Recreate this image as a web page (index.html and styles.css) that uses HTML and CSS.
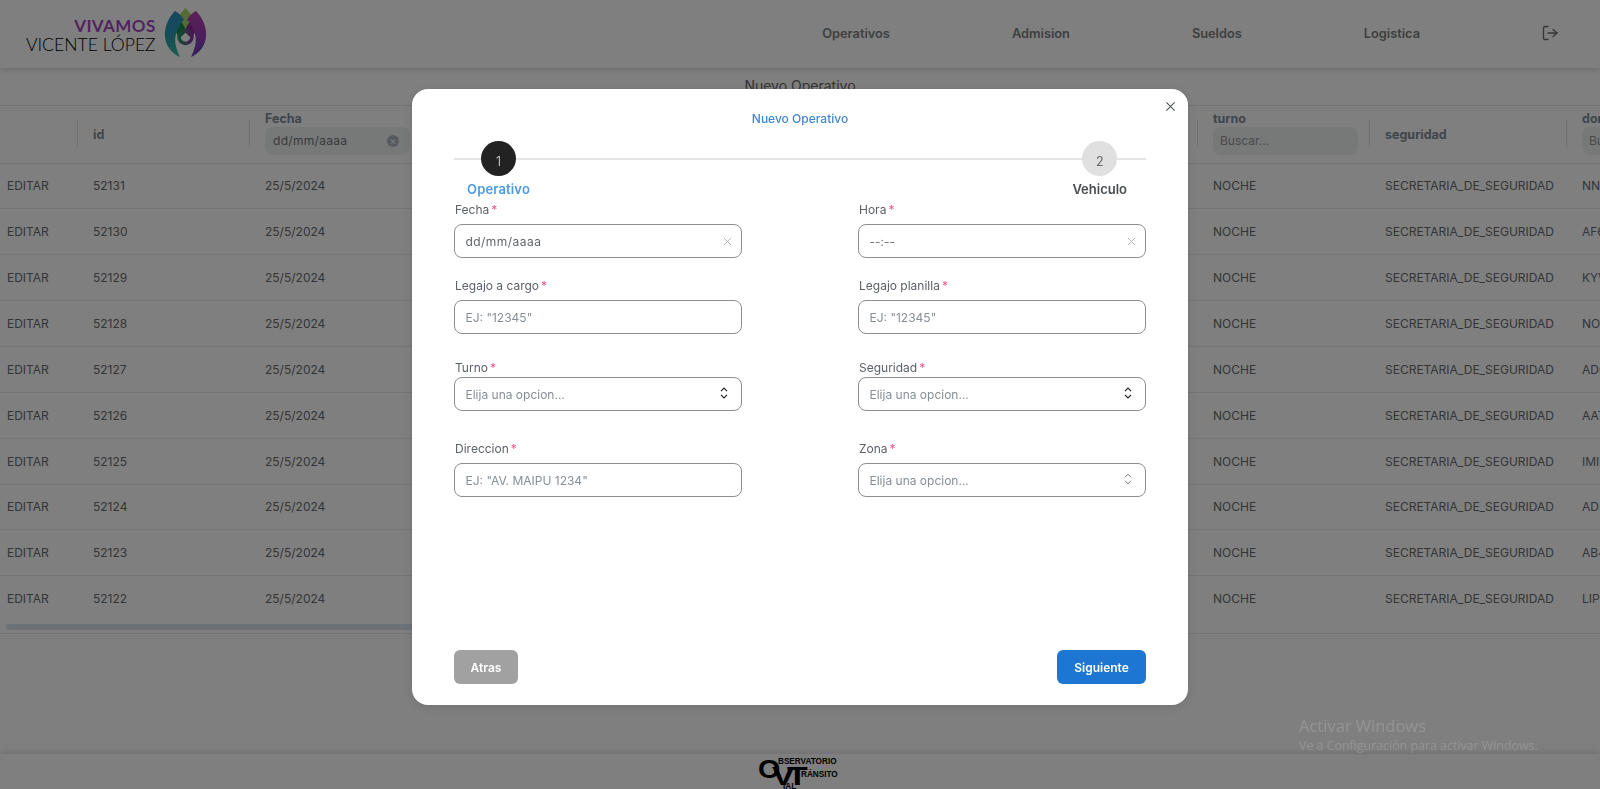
FILE: index.html
```html
<!DOCTYPE html>
<html lang="es">
<head>
    <meta charset="UTF-8">
    <meta name="viewport" content="width=device-width, initial-scale=1.0">
    <title>Nuevo Operativo</title>
    <link rel="stylesheet" href="styles.css">
</head>
<body>
    <header class="topbar">
        <div class="brand">
            <div class="brand-text">
                <span class="brand-top">VIVAMOS</span>
                <span class="brand-bottom">VICENTE LÓPEZ</span>
            </div>
            <svg class="brand-mark" viewBox="0 0 44 50" aria-hidden="true">
                <defs>
                    <linearGradient id="petalLeft" x1="0" y1="0" x2="0" y2="1">
                        <stop offset="0" stop-color="#2f8fc0"/>
                        <stop offset="0.55" stop-color="#2a9ab0"/>
                        <stop offset="1" stop-color="#2fc090"/>
                    </linearGradient>
                    <linearGradient id="petalRight" x1="0" y1="0" x2="0" y2="1">
                        <stop offset="0" stop-color="#b840b0"/>
                        <stop offset="0.5" stop-color="#9a3fb4"/>
                        <stop offset="1" stop-color="#6240c0"/>
                    </linearGradient>
                    <linearGradient id="ring" x1="0" y1="0" x2="1" y2="0">
                        <stop offset="0" stop-color="#1f9a58"/>
                        <stop offset="1" stop-color="#8a3aa8"/>
                    </linearGradient>
                </defs>
                <path d="M21.5 1C25 5 29 9 30 14L22 25L13 14C14 9 18 5 21.5 1Z" fill="#a8d868"/>
                <path d="M13 11C17 14 21 19 22 25L15 32L10 20Z" fill="#0f8a50"/>
                <path d="M30 11C26 14 22 19 21 25L28 32L33 20Z" fill="#8a2f90"/>
                <path d="M11 4C4 11 0 21 1 30C2 40 9 47 16 50C12 42 10 34 12 27C14 21 16 16 20 13C18 9 15 6 11 4Z" fill="url(#petalLeft)"/>
                <path d="M32 4C39 11 43 21 42 30C41 40 34 47 27 50C31 42 33 34 31 27C29 21 27 16 23 13C25 9 28 6 32 4Z" fill="url(#petalRight)"/>
                <circle cx="21.5" cy="30" r="6.5" fill="none" stroke="url(#ring)" stroke-width="3.5"/>
            </svg>
        </div>
        <nav class="nav">
            <a class="nav-link">Operativos</a>
            <a class="nav-link">Admision</a>
            <a class="nav-link">Sueldos</a>
            <a class="nav-link">Logistica</a>
            <svg class="logout" viewBox="0 0 16 16" aria-hidden="true">
                <path d="M6 1.5H2.8A1.3 1.3 0 0 0 1.5 2.8v10.4a1.3 1.3 0 0 0 1.3 1.3H6"/>
                <path d="M11 4.5L15 8L11 11.5"/>
                <path d="M15 8H6"/>
            </svg>
        </nav>
    </header>

    <main class="content">
        <h2 class="page-title">Nuevo Operativo</h2>
        <div class="table-wrap">
            <table class="data-table">
                <colgroup>
                    <col class="col-action">
                    <col class="col-id">
                    <col class="col-date">
                    <col class="col-rest">
                    <col class="col-turn">
                    <col class="col-security">
                    <col class="col-domain">
                </colgroup>
                <thead>
                    <tr>
                        <th></th>
                        <th class="sep">id</th>
                        <th class="sep">
                            <span class="th-label">Fecha</span>
                            <div class="filter filter-date">dd/mm/aaaa<span class="filter-clear">×</span></div>
                        </th>
                        <th></th>
                        <th class="sep">
                            <span class="th-label">turno</span>
                            <div class="filter filter-empty">Buscar...</div>
                        </th>
                        <th class="sep">seguridad</th>
                        <th class="sep">
                            <span class="th-label">dominio</span>
                            <div class="filter filter-empty">Buscar...</div>
                        </th>
                    </tr>
                </thead>
                <tbody>
                    <tr><td>EDITAR</td><td>52131</td><td>25/5/2024</td><td></td><td>NOCHE</td><td>SECRETARIA_DE_SEGURIDAD</td><td>NNA123</td></tr>
                    <tr><td>EDITAR</td><td>52130</td><td>25/5/2024</td><td></td><td>NOCHE</td><td>SECRETARIA_DE_SEGURIDAD</td><td>AF6123</td></tr>
                    <tr><td>EDITAR</td><td>52129</td><td>25/5/2024</td><td></td><td>NOCHE</td><td>SECRETARIA_DE_SEGURIDAD</td><td>KYW123</td></tr>
                    <tr><td>EDITAR</td><td>52128</td><td>25/5/2024</td><td></td><td>NOCHE</td><td>SECRETARIA_DE_SEGURIDAD</td><td>NOA123</td></tr>
                    <tr><td>EDITAR</td><td>52127</td><td>25/5/2024</td><td></td><td>NOCHE</td><td>SECRETARIA_DE_SEGURIDAD</td><td>AD0123</td></tr>
                    <tr><td>EDITAR</td><td>52126</td><td>25/5/2024</td><td></td><td>NOCHE</td><td>SECRETARIA_DE_SEGURIDAD</td><td>AAT123</td></tr>
                    <tr><td>EDITAR</td><td>52125</td><td>25/5/2024</td><td></td><td>NOCHE</td><td>SECRETARIA_DE_SEGURIDAD</td><td>IMI123</td></tr>
                    <tr><td>EDITAR</td><td>52124</td><td>25/5/2024</td><td></td><td>NOCHE</td><td>SECRETARIA_DE_SEGURIDAD</td><td>AD5123</td></tr>
                    <tr><td>EDITAR</td><td>52123</td><td>25/5/2024</td><td></td><td>NOCHE</td><td>SECRETARIA_DE_SEGURIDAD</td><td>AB4123</td></tr>
                    <tr><td>EDITAR</td><td>52122</td><td>25/5/2024</td><td></td><td>NOCHE</td><td>SECRETARIA_DE_SEGURIDAD</td><td>LIP123</td></tr>
                </tbody>
            </table>
            <div class="scroll-track"><div class="scroll-thumb"></div></div>
        </div>
    </main>

    <footer class="bottombar">
        <div class="ovt">
            <span class="ovt-o">O</span>
            <span class="ovt-v">V</span>
            <span class="ovt-t">T</span>
            <span class="ovt-line1">BSERVATORIO</span>
            <span class="ovt-line2">RÁNSITO</span>
            <span class="ovt-line3">IAL</span>
        </div>
    </footer>

    <div class="overlay">
        <section class="modal">
            <button class="modal-close" aria-label="Cerrar">
                <svg viewBox="0 0 12 12" aria-hidden="true"><path d="M1.5 1.5L10.5 10.5M10.5 1.5L1.5 10.5"/></svg>
            </button>
            <h3 class="modal-title">Nuevo Operativo</h3>

            <div class="stepper">
                <div class="step step-active">
                    <span class="step-dot">1</span>
                    <span class="step-label">Operativo</span>
                </div>
                <div class="step">
                    <span class="step-dot">2</span>
                    <span class="step-label">Vehiculo</span>
                </div>
            </div>

            <form class="form">
                <div class="form-row">
                    <div class="field">
                        <label class="field-label">Fecha<span class="req">*</span></label>
                        <div class="control">
                            <input class="input input-value" type="text" value="dd/mm/aaaa">
                            <svg class="icon-clear" viewBox="0 0 10 10" aria-hidden="true"><path d="M1 1L9 9M9 1L1 9"/></svg>
                        </div>
                    </div>
                    <div class="field">
                        <label class="field-label">Hora<span class="req">*</span></label>
                        <div class="control">
                            <input class="input input-time" type="text" value="--:--">
                            <svg class="icon-clear" viewBox="0 0 10 10" aria-hidden="true"><path d="M1 1L9 9M9 1L1 9"/></svg>
                        </div>
                    </div>
                </div>

                <div class="form-row row-b">
                    <div class="field">
                        <label class="field-label">Legajo a cargo<span class="req">*</span></label>
                        <div class="control"><input class="input" type="text" placeholder='EJ: "12345"'></div>
                    </div>
                    <div class="field">
                        <label class="field-label">Legajo planilla<span class="req">*</span></label>
                        <div class="control"><input class="input" type="text" placeholder='EJ: "12345"'></div>
                    </div>
                </div>

                <div class="form-row row-c">
                    <div class="field field-select">
                        <label class="field-label">Turno<span class="req">*</span></label>
                        <div class="control">
                            <input class="input" type="text" placeholder="Elija una opcion...">
                            <svg class="icon-chevrons" viewBox="0 0 8 12" aria-hidden="true"><path d="M1 4.2L4 1.2L7 4.2M1 7.8L4 10.8L7 7.8"/></svg>
                        </div>
                    </div>
                    <div class="field field-select">
                        <label class="field-label">Seguridad<span class="req">*</span></label>
                        <div class="control">
                            <input class="input" type="text" placeholder="Elija una opcion...">
                            <svg class="icon-chevrons" viewBox="0 0 8 12" aria-hidden="true"><path d="M1 4.2L4 1.2L7 4.2M1 7.8L4 10.8L7 7.8"/></svg>
                        </div>
                    </div>
                </div>

                <div class="form-row row-d">
                    <div class="field">
                        <label class="field-label">Direccion<span class="req">*</span></label>
                        <div class="control"><input class="input" type="text" placeholder='EJ: "AV. MAIPU 1234"'></div>
                    </div>
                    <div class="field">
                        <label class="field-label">Zona<span class="req">*</span></label>
                        <div class="control">
                            <input class="input" type="text" placeholder="Elija una opcion...">
                            <svg class="icon-chevrons icon-light" viewBox="0 0 8 12" aria-hidden="true"><path d="M1 4.2L4 1.2L7 4.2M1 7.8L4 10.8L7 7.8"/></svg>
                        </div>
                    </div>
                </div>
            </form>

            <div class="modal-actions">
                <button class="btn btn-back">Atras</button>
                <button class="btn btn-next">Siguiente</button>
            </div>
        </section>
    </div>

    <div class="watermark">
        <div class="watermark-title">Activar Windows</div>
        <div class="watermark-text">Ve a Configuración para activar Windows.</div>
    </div>
</body>
</html>
```

FILE: styles.css
```css
* {
    box-sizing: border-box;
}
html, body {
    height: 100%;
}
body {
    margin: 0;
    height: 789px;
    overflow: hidden;
    display: flex;
    flex-direction: column;
    background-color: #fff;
    color: #495057;
    font-family: Inter, "Noto Sans", sans-serif;
}

/* top bar */
.topbar {
    height: 68px;
    flex-shrink: 0;
    display: flex;
    align-items: center;
    justify-content: space-between;
    padding: 0 42px 0 26px;
    box-shadow: 0 2px 6px rgba(0, 0, 0, 0.16);
}
.brand {
    display: flex;
    align-items: center;
    gap: 8px;
}
.brand-text {
    display: flex;
    flex-direction: column;
    align-items: flex-end;
    margin-top: 2px;
    font-family: Lato, sans-serif;
    line-height: 19px;
}
.brand-top {
    font-size: 17px;
    font-weight: 700;
    letter-spacing: 0.4px;
    color: #a34bc0;
}
.brand-bottom {
    font-size: 17.6px;
    font-weight: 300;
    color: #000;
}
.brand-mark {
    width: 44px;
    height: 50px;
    margin-top: -4px;
}
.nav {
    display: flex;
    align-items: center;
    gap: 122px;
    margin-top: -2px;
}
.nav-link {
    font-size: 12.8px;
    font-weight: 600;
    color: #7a7e82;
}
.logout {
    width: 16px;
    height: 16px;
    fill: none;
    stroke: #6a6e72;
    stroke-width: 1.4;
    stroke-linecap: round;
    stroke-linejoin: round;
}

/* page */
.content {
    flex: 1;
    min-height: 0;
}
.page-title {
    margin: 9px 0 0;
    height: 28px;
    line-height: 18px;
    text-align: center;
    font-size: 14px;
    font-weight: 400;
    color: #666;
}
.table-wrap {
    overflow: hidden;
    border-top: 1px solid #e4e6e8;
    border-bottom: 1px solid #e4e6e8;
}
.data-table {
    width: 1766px;
    table-layout: fixed;
    border-collapse: collapse;
    font-size: 12px;
}
.col-action { width: 77px; }
.col-id { width: 172px; }
.col-date { width: 172px; }
.col-rest { width: 776px; }
.col-turn { width: 172px; }
.col-security { width: 197px; }
.col-domain { width: 200px; }

.data-table th {
    position: relative;
    height: 57px;
    padding: 2px 10px 0 16px;
    text-align: left;
    font-size: 12.5px;
    font-weight: 700;
    line-height: 16px;
    color: #7f8a96;
    border-bottom: 1px solid #e4e6e8;
    white-space: nowrap;
}
.data-table th.sep::before {
    content: "";
    position: absolute;
    left: 0;
    top: 14px;
    height: 27px;
    width: 1px;
    background-color: #dfe2e5;
}
.th-label {
    display: block;
    margin-top: -4px;
}
.filter {
    position: relative;
    display: flex;
    align-items: center;
    width: 145px;
    height: 28px;
    padding: 0 8px;
    border-radius: 8px;
    background-color: #eff0f1;
    font-size: 12px;
    font-weight: 400;
    color: #6e757c;
    letter-spacing: 0.3px;
}
.filter-empty {
    padding: 0 7px;
    color: #8f969c;
    letter-spacing: 0;
}
.filter-clear {
    position: absolute;
    right: 11px;
    top: 8px;
    width: 12px;
    height: 12px;
    border-radius: 50%;
    background-color: #adb5bd;
    color: #f1f3f5;
    font-size: 11px;
    line-height: 12px;
    text-align: center;
    letter-spacing: 0;
}
.data-table td {
    height: 45.86px;
    padding: 0 8px 0 16px;
    border-bottom: 1px solid #e9ecef;
    font-weight: 400;
    color: #666b70;
    white-space: nowrap;
    overflow: hidden;
}
.data-table tbody tr:last-child td {
    border-bottom: none;
}
.data-table td:first-child {
    padding-left: 7px;
}
.scroll-track {
    padding: 2.4px 0 3px 6px;
}
.scroll-thumb {
    width: 800px;
    height: 6px;
    border-radius: 3px;
    background-color: #d8e4ec;
}

/* bottom bar */
.bottombar {
    height: 35px;
    flex-shrink: 0;
    display: flex;
    justify-content: center;
    overflow: hidden;
    box-shadow: 0 -2px 6px rgba(0, 0, 0, 0.12);
}
.ovt {
    position: relative;
    width: 80px;
    height: 35px;
    margin-left: -4px;
    color: #000;
    font-family: "Liberation Sans", sans-serif;
    font-weight: 700;
}
.ovt span {
    position: absolute;
    line-height: 1;
    transform-origin: left top;
}
.ovt-o {
    left: 0;
    top: 3px;
    font-size: 25px;
    transform: scaleX(1.15);
}
.ovt-v {
    left: 14px;
    top: 9px;
    font-size: 26px;
    transform: scaleX(1.3);
}
.ovt-t {
    left: 29px;
    top: 9px;
    font-size: 26px;
    transform: scaleX(1.3);
}
.ovt-line1 {
    left: 20px;
    top: 4px;
    font-size: 8.2px;
}
.ovt-line2 {
    left: 43px;
    top: 17px;
    font-size: 8.2px;
}
.ovt-line3 {
    left: 25px;
    top: 29px;
    font-size: 8.2px;
}

/* modal */
.overlay {
    position: fixed;
    top: 0;
    left: 0;
    right: 0;
    bottom: 0;
    display: flex;
    justify-content: center;
    align-items: flex-start;
    padding-top: 89px;
    background-color: rgba(0, 0, 0, 0.5);
}
.modal {
    position: relative;
    width: 776px;
    height: 616px;
    display: flex;
    flex-direction: column;
    padding: 21px 42px;
    border-radius: 16px;
    background-color: #fff;
    box-shadow: 0 2px 12px rgba(0, 0, 0, 0.1);
}
.modal-close {
    position: absolute;
    top: 12px;
    right: 12px;
    width: 11px;
    height: 11px;
    padding: 0;
    border: none;
    background: none;
}
.modal-close svg {
    display: block;
    width: 11px;
    height: 11px;
    fill: none;
    stroke: #495057;
    stroke-width: 1.1;
}
.modal-title {
    margin: 1px 0 0;
    height: 16px;
    line-height: 16px;
    text-align: center;
    font-size: 12px;
    font-weight: 500;
    color: #3f87d4;
}
.stepper {
    position: relative;
    display: flex;
    justify-content: space-between;
    margin-top: 14px;
    padding: 0 19px 0 13px;
}
.stepper::before {
    content: "";
    position: absolute;
    left: 0;
    right: 0;
    top: 17px;
    height: 2px;
    background-color: #e3e5e7;
}
.step {
    position: relative;
    display: flex;
    flex-direction: column;
    align-items: center;
}
.step-dot {
    display: flex;
    align-items: center;
    justify-content: center;
    width: 35px;
    height: 35px;
    padding-top: 6px;
    border-radius: 50%;
    background-color: #e0e0e0;
    font-size: 12.5px;
    color: #666;
}
.step-label {
    margin-top: 4px;
    height: 18px;
    line-height: 18px;
    font-size: 13px;
    font-weight: 600;
    color: #474c51;
}
.step-active .step-dot {
    background-color: #222;
    color: #bbb;
}
.step-active .step-label {
    letter-spacing: 0.15px;
    color: #4a9be6;
}
.form {
    margin-top: 2px;
}
.form-row {
    display: grid;
    grid-template-columns: 288px 288px;
    justify-content: space-between;
}
.row-b { margin-top: 18px; }
.row-c { margin-top: 24px; }
.row-d { margin-top: 28px; }
.field-label {
    display: block;
    height: 18px;
    line-height: 20px;
    margin-bottom: 6px;
    padding-left: 1px;
    font-size: 12px;
    color: #5c6167;
}
.field-select .field-label {
    margin-bottom: 1px;
}
.req {
    margin-left: 2px;
    color: #f0558a;
}
.control {
    position: relative;
}
.input {
    display: block;
    width: 100%;
    height: 34px;
    padding: 0 30px 0 10.5px;
    border: 1px solid #8a8f94;
    border-radius: 8px;
    outline: none;
    background-color: #fff;
    font-family: inherit;
    font-size: 12px;
    color: #5f666c;
}
.input::placeholder {
    color: #868e96;
    opacity: 1;
}
.input-value {
    letter-spacing: 0.45px;
}
.input-time {
    color: #777;
}
.icon-clear {
    position: absolute;
    right: 10px;
    top: 13px;
    width: 9px;
    height: 9px;
    fill: none;
    stroke: #b4b9be;
    stroke-width: 1.1;
}
.icon-chevrons {
    position: absolute;
    right: 14px;
    top: 10px;
    width: 8px;
    height: 12px;
    fill: none;
    stroke: #222;
    stroke-width: 1.2;
}
.icon-light {
    stroke: #777;
    stroke-width: 1;
}
.modal-actions {
    display: flex;
    justify-content: space-between;
    margin-top: auto;
}
.btn {
    height: 34px;
    border: none;
    border-radius: 6px;
    font-family: inherit;
    font-size: 12px;
    font-weight: 600;
    color: #fff;
}
.btn-back {
    width: 64px;
    background-color: #a1a1a1;
}
.btn-next {
    width: 89px;
    background-color: #1c76d2;
}

/* windows notice */
.watermark {
    position: fixed;
    left: 1299px;
    top: 715px;
    font-family: "Open Sans", sans-serif;
    color: rgba(255, 255, 255, 0.16);
    white-space: nowrap;
}
.watermark-title {
    font-size: 16.5px;
    line-height: 22px;
}
.watermark-text {
    margin-top: 1px;
    font-size: 12.4px;
    line-height: 16px;
}
```
